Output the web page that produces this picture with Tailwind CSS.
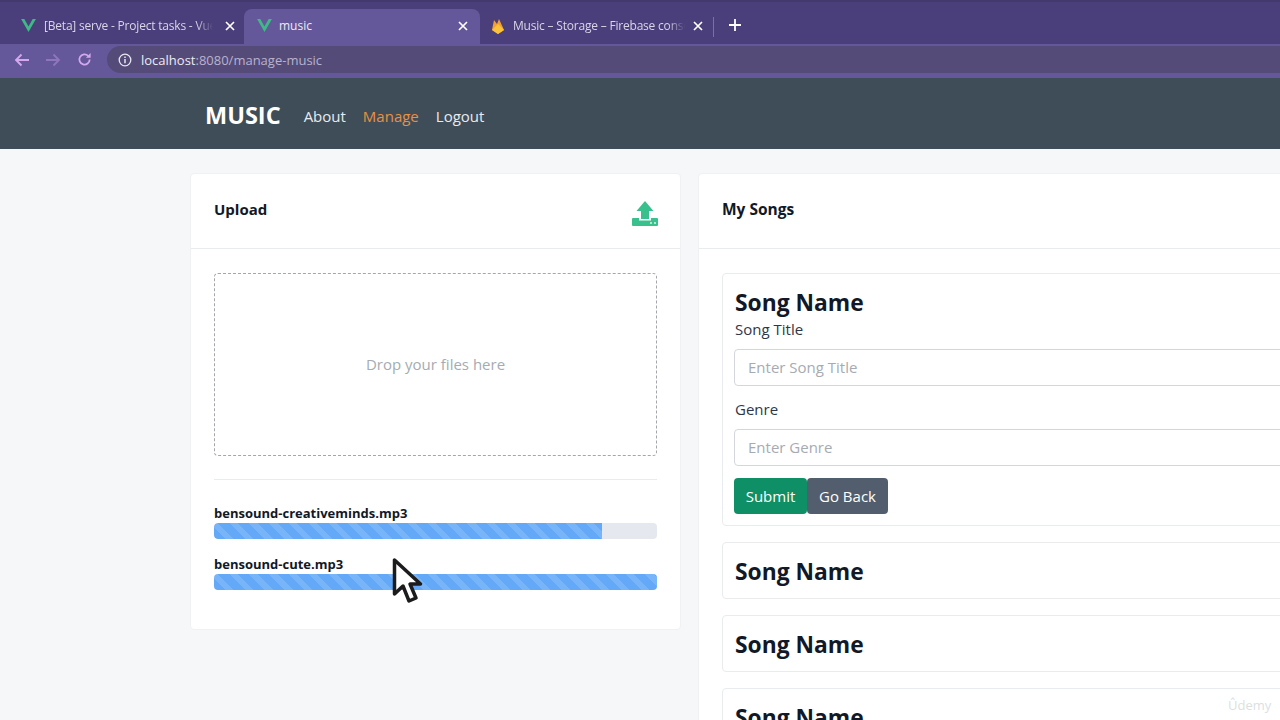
<!DOCTYPE html>
<html lang="en">
<head>
    <meta charset="UTF-8">
    <meta name="viewport" content="width=device-width, initial-scale=1.0">
    <title>music</title>
    <script src="https://cdn.jsdelivr.net/npm/@tailwindcss/browser@4"></script>
</head>
<body class="relative w-[1280px] h-[720px] overflow-hidden bg-[#f5f7f8] font-['Open_Sans','Noto_Sans',sans-serif]">
    <!-- browser tabs -->
    <div class="h-[44px] bg-[#4b3f7b] border-t-2 border-[#43396c] flex items-end pl-2 text-[12px] text-[#d9d5e8]">
        <div class="w-[236px] h-[33px] flex items-center pl-[13px] pr-[9px] pb-[4px] gap-2">
            <svg class="w-[15px] h-[13px] shrink-0" viewBox="0 0 16 14"><path d="M0 0h3.5L8 8l4.500-8H16L8 14z" fill="#3fb985"/></svg>
            <span class="flex-1 whitespace-nowrap overflow-hidden tracking-[-0.2px] [mask-image:linear-gradient(to_right,black_90%,transparent)]">[Beta] serve - Project tasks - Vue CLI</span>
            <svg class="w-[10px] h-[10px] shrink-0 ml-1" viewBox="0 0 10 10"><path d="M1 1l8 8M9 1l-8 8" stroke="#fff" stroke-width="1.700"/></svg>
        </div>
        <div class="w-[236px] h-[35px] bg-[#65589a] rounded-t-lg flex items-center pl-[13px] pr-[12px] pb-[2px] gap-2">
            <svg class="w-[15px] h-[13px] shrink-0" viewBox="0 0 16 14"><path d="M0 0h3.5L8 8l4.500-8H16L8 14z" fill="#3fb985"/></svg>
            <span class="flex-1 text-[#eeeaf6] -ml-px">music</span>
            <svg class="w-[10px] h-[10px] shrink-0" viewBox="0 0 10 10"><path d="M1 1l8 8M9 1l-8 8" stroke="#fff" stroke-width="1.700"/></svg>
        </div>
        <div class="w-[233px] h-[33px] flex items-center pl-[11px] pr-[10px] pb-[4px] gap-2">
            <svg class="w-[14px] h-[16px] shrink-0" viewBox="0 0 14 16"><path d="M1 12L3 2l3 4 2-5 5 11-6 4z" fill="#f6a02c"/><path d="M1 12l6-6 6 6-6 4z" fill="#fbc23a"/></svg>
            <span class="flex-1 whitespace-nowrap overflow-hidden tracking-[-0.2px] [mask-image:linear-gradient(to_right,black_90%,transparent)]">Music – Storage – Firebase console</span>
            <svg class="w-[10px] h-[10px] shrink-0" viewBox="0 0 10 10"><path d="M1 1l8 8M9 1l-8 8" stroke="#fff" stroke-width="1.700"/></svg>
        </div>
        <div class="w-px h-[20px] bg-[#7a70a3] mb-[7px]"></div>
        <svg class="w-[12px] h-[12px] ml-[15px] mb-[13px]" viewBox="0 0 12 12"><path d="M6 0v12M0 6h12" stroke="#fff" stroke-width="1.800"/></svg>
    </div>

    <!-- address bar -->
    <div class="h-[34px] bg-[#65589a] flex items-center pl-[14px] pb-[3px]">
        <svg class="w-[16px] h-[14px]" viewBox="0 0 16 14" fill="none" stroke="#d5a8ee" stroke-width="1.800"><path d="M15 7H2M7.500 1.500L2 7l5.500 5.500"/></svg>
        <svg class="w-[16px] h-[14px] ml-[15px]" viewBox="0 0 16 14" fill="none" stroke="#8e76bd" stroke-width="1.800"><path d="M1 7h13M8.500 1.500L14 7l-5.500 5.500"/></svg>
        <svg class="w-[15px] h-[15px] ml-[16px]" viewBox="0 0 16 16" fill="none"><path d="M13.500 8a5.500 5.500 0 1 1-1.600-3.900" stroke="#d5a8ee" stroke-width="1.900"/><path d="M14.500 1v5h-5z" fill="#d5a8ee"/></svg>
        <div class="ml-[15px] flex-1 h-[27px] rounded-l-full bg-[#544b78] flex items-center pl-[11px] text-[13px] text-[#b8b2cf]">
            <svg class="w-[14px] h-[14px] mr-[9px]" viewBox="0 0 14 14" fill="none" stroke="#e8e6f0"><circle cx="7" cy="7" r="5.800" stroke-width="1.300"/><path d="M7 6v4.200M7 3.500v1.400" stroke-width="1.500"/></svg>
            <span class="pt-[2px]"><span class="text-[#eceaf3]">localhost</span>:8080/manage-music</span>
        </div>
    </div>

    <!-- site header -->
    <header class="h-[71px] bg-[#3f4d59] flex items-center pl-[205px] pt-[4px]">
        <span class="text-[23.5px] font-bold text-white mr-[23px]">MUSIC</span>
        <nav class="flex gap-[17px] text-[15px] mt-px">
            <a class="text-[#e8ebee]">About</a>
            <a class="text-[#e8913f]">Manage</a>
            <a class="text-[#e8ebee]">Logout</a>
        </nav>
    </header>

    <!-- page -->
    <main class="flex gap-[17px] pl-[190px] pt-[24px] w-[1500px]">
        <section class="w-[491px] h-[457px] shrink-0 bg-white rounded border border-[#eff1f3]">
            <div class="h-[75px] border-b border-[#e8ecef] flex justify-between pl-[23px] pr-[22px]">
                <h2 class="text-[15px] font-bold text-[#111827] pt-[24px]">Upload</h2>
                <svg class="w-[26px] h-[25px] mt-[27px]" viewBox="0 0 26 25"><path d="M13 0l8.500 10H17v8H9v-8H4.500z" fill="#38c18c"/><path d="M1 17h6v2.500h12V17h6a1 1 0 0 1 1 1v6a1 1 0 0 1-1 1H1a1 1 0 0 1-1-1v-6a1 1 0 0 1 1-1z" fill="#38c18c"/><path d="M18 22h2M22 22h2" stroke="#d6f5e8" stroke-width="1.400"/></svg>
            </div>
            <div class="px-[23px] pt-[24px]">
                <div class="h-[183px] border border-dashed border-[#a3a7ac] rounded flex items-center justify-center text-[15px] text-[#a6abb2]">Drop your files here</div>
                <hr class="mt-[23px] border-[#e8ecef]">
                <div class="mt-[25px]">
                    <div class="text-[13px] leading-[17px] font-bold text-[#111827]">bensound-creativeminds.mp3</div>
                    <div class="h-[16px] mt-[1px] bg-[#e5e8ef] rounded overflow-hidden">
                        <div class="h-full w-[388px] rounded-l bg-[repeating-linear-gradient(45deg,#63a9f7_0,#63a9f7_8px,#78b5f8_8px,#78b5f8_14px)]"></div>
                    </div>
                </div>
                <div class="mt-[17px]">
                    <div class="text-[13px] leading-[17px] font-bold text-[#111827]">bensound-cute.mp3</div>
                    <div class="h-[16px] mt-[1px] bg-[#e5e8ef] rounded overflow-hidden">
                        <div class="h-full w-full bg-[repeating-linear-gradient(45deg,#63a9f7_0,#63a9f7_8px,#78b5f8_8px,#78b5f8_14px)]"></div>
                    </div>
                </div>
            </div>
        </section>

        <section class="w-[700px] shrink-0 bg-white rounded border border-[#eff1f3] h-[640px]">
            <div class="h-[75px] border-b border-[#e8ecef] pl-[23px]">
                <h2 class="text-[15.5px] font-bold text-[#111827] pt-[24px]">My Songs</h2>
            </div>
            <div class="pl-[23px] pt-[24px] flex flex-col gap-[16px]">
                <div class="h-[253px] border border-[#e8ecef] rounded pl-[11px] pt-[13px]">
                    <h4 class="text-[22.8px] leading-[32px] font-bold text-[#111827] ml-px">Song Name</h4>
                    <label class="block text-[15px] leading-[24px] text-[#2d3748] -mt-[2px] ml-px">Song Title</label>
                    <input class="block w-full h-[37px] mt-[8px] pl-[13px] pb-[2px] border border-[#d3d7dc] rounded text-[15px] placeholder:text-[#a6abb2]" placeholder="Enter Song Title">
                    <label class="block text-[15px] leading-[24px] text-[#2d3748] mt-[11px] ml-px">Genre</label>
                    <input class="block w-full h-[37px] mt-[8px] pl-[13px] pb-[2px] border border-[#d3d7dc] rounded text-[15px] placeholder:text-[#a6abb2]" placeholder="Enter Genre">
                    <div class="flex mt-[12px]">
                        <button class="w-[73px] h-[36px] rounded bg-[#0f8f66] text-white text-[15px]">Submit</button>
                        <button class="w-[81px] h-[36px] rounded bg-[#525e6d] text-white text-[15px]">Go Back</button>
                    </div>
                </div>
                <div class="h-[57px] border border-[#e8ecef] rounded pl-[12px] pt-[3px] flex items-center">
                    <h4 class="text-[22.8px] font-bold text-[#111827]">Song Name</h4>
                </div>
                <div class="h-[57px] border border-[#e8ecef] rounded pl-[12px] pt-[3px] flex items-center">
                    <h4 class="text-[22.8px] font-bold text-[#111827]">Song Name</h4>
                </div>
                <div class="h-[57px] border border-[#e8ecef] rounded pl-[12px] pt-[3px] flex items-center">
                    <h4 class="text-[22.8px] font-bold text-[#111827]">Song Name</h4>
                </div>
            </div>
        </section>
    </main>

    <!-- cursor -->
    <svg class="absolute left-[391px] top-[557px] w-[32px] h-[48px]" viewBox="0 0 32 48"><path d="M3.500 3v34l8.500-8 6 15 7-3-6-14h10.500z" fill="#fff" stroke="#1c1c1c" stroke-width="3.500" stroke-linejoin="round"/></svg>

    <!-- watermark -->
    <span class="absolute left-[1228px] top-[696px] text-[13px] text-[#dcdfe2]">Ûdemy</span>
</body>
</html>
